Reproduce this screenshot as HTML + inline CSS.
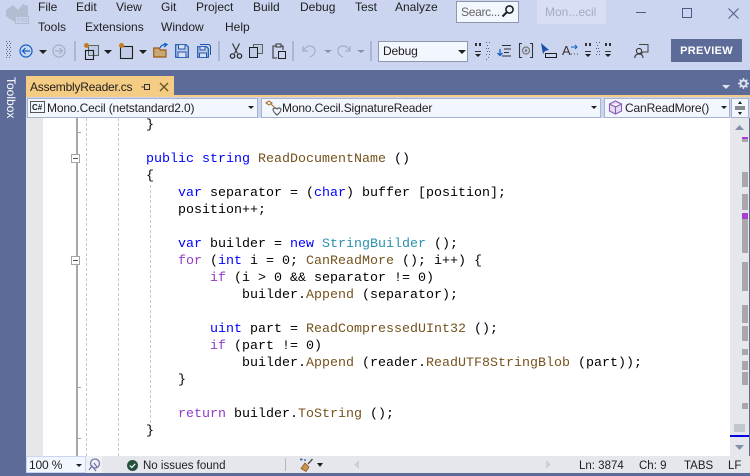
<!DOCTYPE html>
<html><head><meta charset="utf-8">
<style>
html,body{margin:0;padding:0;background:#ccd5f0;}
#r{position:relative;width:750px;height:476px;overflow:hidden;background:#ccd5f0;font-family:"Liberation Sans",sans-serif;font-size:12px;color:#1e1e1e;}
#r div,#r span.a,#r svg{position:absolute;}
.m{top:0;line-height:14px;white-space:nowrap;}
.c{font-family:"Liberation Mono",monospace;font-size:13.33px;line-height:17px;height:17px;white-space:pre;color:#000;}
.k{color:#0000ff}.t{color:#2b91af}.f{color:#74531f}.p{color:#8f3cc8}
.dd{background:#f2f6fe;border:1px solid #a9b2cc;box-sizing:border-box;height:20px;line-height:18px;white-space:nowrap;letter-spacing:-.15px;}
.ar{width:0;height:0;border-left:4px solid transparent;border-right:4px solid transparent;border-top:4px solid #1e1e1e;}
.mk{left:742px;width:6px;background:#a8a8a8;}
.ds{width:1px;background:repeating-linear-gradient(to bottom,#c8c8c8 0,#c8c8c8 3px,transparent 3px,transparent 5px);}
</style></head><body><div id="r">

<!-- logo -->
<svg style="left:5px;top:3px" width="24" height="24" viewBox="0 0 24 24"><path d="M1 7 L8 2 L13 7 L18 1 L23 3 L23 13 L10 13 L10 19 L5 16 L1 13Z" fill="#b4bcd2"/><rect x="10.5" y="13.5" width="13" height="7" fill="#ccd5f0" stroke="#b4bcd2" stroke-width="1.2"/><text x="12" y="19.2" font-family="Liberation Sans" font-size="5.2" font-weight="bold" fill="#b4bcd2">PRE</text></svg>

<div class="m" style="left:38px;top:0">File</div>
<div class="m" style="left:76px;top:0">Edit</div>
<div class="m" style="left:116px;top:0">View</div>
<div class="m" style="left:161px;top:0">Git</div>
<div class="m" style="left:196px;top:0">Project</div>
<div class="m" style="left:253px;top:0">Build</div>
<div class="m" style="left:300px;top:0">Debug</div>
<div class="m" style="left:355px;top:0">Test</div>
<div class="m" style="left:395px;top:0">Analyze</div>
<div class="m" style="left:38px;top:20px">Tools</div>
<div class="m" style="left:85px;top:20px">Extensions</div>
<div class="m" style="left:161px;top:20px">Window</div>
<div class="m" style="left:225px;top:20px">Help</div>

<!-- search -->
<div style="left:456px;top:1px;width:63px;height:22px;box-sizing:border-box;background:#f2f6fe;border:1px solid #8f97ad;"></div>
<div class="m" style="left:461px;top:5px;color:#666;letter-spacing:-.3px">Searc...</div>
<svg style="left:501px;top:4px" width="14" height="14" viewBox="0 0 14 14"><circle cx="8.5" cy="5.5" r="3.6" fill="none" stroke="#1e1e1e" stroke-width="1.6"/><path d="M6 8 L1.5 12.5" stroke="#1e1e1e" stroke-width="2"/></svg>

<!-- solution name -->
<div style="left:537px;top:0;width:69px;height:24px;background:#d8dff5"></div>
<div class="m" style="left:545px;top:5px;color:#a3abc4">Mon...ecil</div>

<!-- window controls -->
<div style="left:636px;top:12px;width:10px;height:1px;background:#4d5a85"></div>
<div style="left:682px;top:8px;width:10px;height:10px;box-sizing:border-box;border:1px solid #4d5a85"></div>
<svg style="left:728px;top:8px" width="11" height="11" viewBox="0 0 11 11"><path d="M.5 .5L10.5 10.5M10.5 .5L.5 10.5" stroke="#4d5a85" stroke-width="1"/></svg>

<!-- toolbar -->
<svg style="left:6px;top:41px" width="6" height="19"><g fill="#5a6584"><rect x="0" y="0" width="1" height="1"/><rect x="3" y="0" width="1" height="1"/><rect x="1" y="2" width="1" height="1"/><rect x="4" y="2" width="1" height="1"/><rect x="0" y="4" width="1" height="1"/><rect x="3" y="4" width="1" height="1"/><rect x="1" y="6" width="1" height="1"/><rect x="4" y="6" width="1" height="1"/><rect x="0" y="8" width="1" height="1"/><rect x="3" y="8" width="1" height="1"/><rect x="1" y="10" width="1" height="1"/><rect x="4" y="10" width="1" height="1"/><rect x="0" y="12" width="1" height="1"/><rect x="3" y="12" width="1" height="1"/><rect x="1" y="14" width="1" height="1"/><rect x="4" y="14" width="1" height="1"/><rect x="0" y="16" width="1" height="1"/><rect x="3" y="16" width="1" height="1"/></g></svg>
<svg style="left:19px;top:44px" width="14" height="14" viewBox="0 0 14 14"><circle cx="7" cy="7" r="6" fill="none" stroke="#0e5fc4" stroke-width="1.2"/><path d="M11 7H3.5M6.5 4L3.5 7L6.5 10" fill="none" stroke="#0e5fc4" stroke-width="1.2"/></svg>
<div class="ar" style="left:39px;top:50px"></div>
<svg style="left:52px;top:44px" width="14" height="14" viewBox="0 0 14 14"><circle cx="7" cy="7" r="6" fill="none" stroke="#a6adc4" stroke-width="1.2"/><path d="M3 7H10.5M7.5 4L10.5 7L7.5 10" fill="none" stroke="#a6adc4" stroke-width="1.2"/></svg>
<div style="left:74px;top:41px;width:2px;height:20px;background:#aab7d8"></div>
<svg style="left:83px;top:42px" width="18" height="18" viewBox="0 0 18 18"><rect x="5.5" y="3.5" width="10" height="10" fill="#c0cbe6" stroke="#55675f"/><rect x="2.5" y="8.5" width="8" height="9" fill="none" stroke="#1e1e1e" stroke-width="1.1"/><circle cx="3.5" cy="3.5" r="2.5" fill="#c27d1e"/></svg>
<div class="ar" style="left:104px;top:50px"></div>
<svg style="left:118px;top:42px" width="17" height="18" viewBox="0 0 17 18"><rect x="2.5" y="4.5" width="12" height="12" fill="#c0cbe6" stroke="#1e1e1e" stroke-width="1.1"/><circle cx="3.5" cy="3.5" r="2.5" fill="#c27d1e"/></svg>
<div class="ar" style="left:139px;top:50px"></div>
<svg style="left:153px;top:43px" width="16" height="15" viewBox="0 0 16 15"><path d="M.7 14V5H6L7.5 7H13V14Z" fill="#c9a873" stroke="#9b5a14" stroke-width="1.2"/><path d="M7 5 Q8 1.5 13 1.5M11 0L14 1.5L11 4" fill="none" stroke="#0e5fc4" stroke-width="1.2"/></svg>
<svg style="left:175px;top:44px" width="14" height="14" viewBox="0 0 14 14"><path d="M.7.7H11L13.3 3V13.3H.7Z" fill="#c0cbe6" stroke="#1b56b0" stroke-width="1.2"/><path d="M3.5 1V5H10V1M3 13V8H11V13" fill="#d6def2" stroke="#1b56b0"/></svg>
<svg style="left:197px;top:44px" width="14" height="14" viewBox="0 0 14 14"><path d="M.7 2.7H9.5L11.3 4.5V13.3H.7Z" fill="#c0cbe6" stroke="#1b56b0" stroke-width="1.2"/><path d="M3 3V6H8V3M2.5 13V9H9.5V13" fill="#d6def2" stroke="#1b56b0"/><path d="M3 .5H12L13.5 2V11" fill="none" stroke="#1b56b0"/></svg>
<div style="left:218px;top:41px;width:2px;height:20px;background:#aab7d8"></div>
<svg style="left:229px;top:43px" width="14" height="16" viewBox="0 0 14 16"><path d="M3.5 .5L8.5 10.5M10.5 .5L5.5 10.5" stroke="#3c3c3c" stroke-width="1.2"/><circle cx="3.5" cy="13" r="2.2" fill="none" stroke="#1e1e1e" stroke-width="1.2"/><circle cx="10.5" cy="13" r="2.2" fill="none" stroke="#1e1e1e" stroke-width="1.2"/></svg>
<svg style="left:249px;top:44px" width="14" height="14" viewBox="0 0 14 14"><rect x="4.5" y=".5" width="9" height="9" fill="#c0cbe6" stroke="#55675f"/><rect x=".5" y="3.5" width="8" height="10" fill="#c0cbe6" stroke="#1e1e1e"/></svg>
<svg style="left:272px;top:43px" width="14" height="16" viewBox="0 0 14 16"><path d="M4 3H1V15H5M9 3H11V7" fill="none" stroke="#333" stroke-width="1.1"/><rect x="4" y="1" width="5" height="3" fill="#ccd5f0" stroke="#333"/><rect x="6.5" y="8.5" width="7" height="7" fill="#ccd5f0" stroke="#1e1e1e"/></svg>
<div style="left:292px;top:41px;width:2px;height:20px;background:#aab7d8"></div>
<svg style="left:302px;top:44px" width="14" height="14" viewBox="0 0 14 14"><path d="M1 2V7H6M1.5 6.5 Q4 2 8 2 Q13 2 13 7 Q13 11 8 13" fill="none" stroke="#a6adc4" stroke-width="1.2"/></svg>
<div class="ar" style="left:324px;top:50px;border-width:3px 4px 0;border-top-color:#8b93ab"></div>
<svg style="left:337px;top:44px" width="14" height="14" viewBox="0 0 14 14"><path d="M13 2V7H8M12.5 6.5 Q10 2 6 2 Q1 2 1 7 Q1 11 6 13" fill="none" stroke="#a6adc4" stroke-width="1.2"/></svg>
<div class="ar" style="left:357px;top:50px;border-width:3px 4px 0;border-top-color:#8b93ab"></div>
<div style="left:370px;top:41px;width:2px;height:20px;background:#aab7d8"></div>

<div class="dd" style="left:378px;top:41px;width:90px;height:21px;background:#f2f6fe;border-color:#8f97ad;padding-left:4px;line-height:19px">Debug</div>
<div class="ar" style="left:458px;top:50px"></div>

<svg style="left:474px;top:41px" width="20" height="19" viewBox="0 0 20 19"><path d="M1 2h2v3H1zM5 2h2v3H5z" fill="#333"/><rect x="1" y="10" width="6" height="1" fill="#333"/><path d="M1 13H7L4 16Z" fill="#1e1e1e"/><g fill="#5a6584"><rect x="12" y="1" width="1" height="1"/><rect x="15" y="1" width="1" height="1"/><rect x="13" y="4" width="1" height="1"/><rect x="14" y="7" width="1" height="1"/><rect x="12" y="7" width="1" height="1"/><rect x="15" y="10" width="1" height="1"/><rect x="13" y="10" width="1" height="1"/><rect x="12" y="13" width="1" height="1"/><rect x="15" y="13" width="1" height="1"/><rect x="14" y="16" width="1" height="1"/><rect x="12" y="18" width="1" height="1"/></g></svg>
<svg style="left:497px;top:44px" width="15" height="14" viewBox="0 0 15 14"><path d="M5 1.5H14M7 5H14M7 8.5H12M5 12H14" stroke="#2f2f2f" stroke-width="1"/><path d="M3 5V11M.5 9L3 11.5L5.5 9" fill="none" stroke="#0e5fc4" stroke-width="1.3"/></svg>
<svg style="left:518px;top:42px" width="16" height="17" viewBox="0 0 16 17"><path d="M4 1.5H1.5V15.5H4M12 1.5H14.5V15.5H12" fill="none" stroke="#333" stroke-width="1.1"/><circle cx="8" cy="8.5" r="3.5" fill="none" stroke="#777" stroke-width="1.2"/><circle cx="8" cy="8.5" r="1.3" fill="#777"/></svg>
<svg style="left:540px;top:42px" width="17" height="17" viewBox="0 0 17 17"><path d="M1 1L9 8L5 9L3 12Z" fill="#1a50a8"/><rect x="5.5" y="11.5" width="11" height="4" fill="#ccd5f0" stroke="#1e1e1e"/></svg>
<div style="left:562px;top:43px;font-size:13px;line-height:15px;color:#333">A</div>
<svg style="left:571px;top:44px" width="7" height="12" viewBox="0 0 7 12"><path d="M0 3H6M4 1L6 3L4 5" fill="none" stroke="#0e5fc4" stroke-width="1"/><path d="M0 10H1M3 10H4M6 10H7" stroke="#444"/></svg>
<svg style="left:584px;top:41px" width="28" height="19" viewBox="0 0 28 19"><path d="M1 2h2v3H1zM5 2h2v3H5z" fill="#333"/><rect x="1" y="10" width="6" height="1" fill="#333"/><path d="M1 13H7L4 16Z" fill="#1e1e1e"/><g fill="#5a6584"><rect x="12" y="1" width="1" height="1"/><rect x="15" y="1" width="1" height="1"/><rect x="13" y="4" width="1" height="1"/><rect x="14" y="7" width="1" height="1"/><rect x="12" y="7" width="1" height="1"/><rect x="15" y="10" width="1" height="1"/><rect x="13" y="10" width="1" height="1"/><rect x="12" y="13" width="1" height="1"/><rect x="15" y="13" width="1" height="1"/></g><path d="M21 2h2v3h-2zM25 2h2v3h-2z" fill="#333"/><rect x="21" y="10" width="6" height="1" fill="#333"/><path d="M21 13H27L24 16Z" fill="#1e1e1e"/></svg>
<svg style="left:634px;top:43px" width="15" height="16" viewBox="0 0 15 16"><path d="M5 1.5H14V9H9L7 11" fill="none" stroke="#444" stroke-width="1"/><circle cx="5" cy="8" r="2.6" fill="none" stroke="#333" stroke-width="1.1"/><path d="M.8 15 Q1 11 5 11 Q9 11 9 15" fill="none" stroke="#333" stroke-width="1.1"/></svg>
<div style="left:671px;top:39px;width:71px;height:23px;background:#5d6b99;color:#fff;font-weight:bold;font-size:11px;line-height:24px;text-align:center;letter-spacing:.3px">PREVIEW</div>

<!-- blue band -->
<div style="left:0;top:70px;width:750px;height:406px;background:#5d6b99"></div>
<div style="left:0;top:77px;width:26px;height:44px"><div style="left:4px;top:0;color:#fff;font-size:12px;line-height:14px;writing-mode:vertical-rl;white-space:nowrap">Toolbox</div></div>
<div style="left:26px;top:76px;width:148px;height:20px;background:#f5cc84"></div>
<div class="m" style="left:30px;top:80px;font-size:12px;letter-spacing:-.22px">AssemblyReader.cs</div>
<svg style="left:141px;top:82px" width="10" height="10" viewBox="0 0 10 10"><path d="M3.5 2V8M.5 5H3.5M3.5 2.5H8.5V7.5H3.5" fill="none" stroke="#333" stroke-width="1"/></svg>
<svg style="left:159px;top:82px" width="10" height="10" viewBox="0 0 10 10"><path d="M1 1L9 9M9 1L1 9" stroke="#6b5427" stroke-width="1.4"/></svg>
<svg style="left:722px;top:85px" width="8" height="4"><path d="M0 0H8L4 4Z" fill="#dfe3f0"/></svg>
<svg style="left:738px;top:78px" width="11" height="11" viewBox="0 0 11 11"><circle cx="5.5" cy="5.5" r="3" fill="none" stroke="#dfe3f0" stroke-width="2"/><path d="M5.5 0V2M5.5 9V11M0 5.5H2M9 5.5H11M1.6 1.6L3 3M8 8L9.4 9.4M9.4 1.6L8 3M3 8L1.6 9.4" stroke="#dfe3f0" stroke-width="1.4"/></svg>

<!-- navigation row -->
<div style="left:26px;top:95px;width:724px;height:2px;background:#f5cc84"></div>
<div style="left:26px;top:97px;width:724px;height:21px;background:#ccd5f0"></div>
<div class="dd" style="left:27px;top:98px;width:231px;padding-left:19px">Mono.Cecil (netstandard2.0)</div>
<svg style="left:30px;top:101px" width="15" height="13" viewBox="0 0 15 13"><rect x=".5" y=".5" width="14" height="11" fill="#f2f6fe" stroke="#555"/><text x="2" y="9" font-family="Liberation Sans" font-size="8" font-weight="bold" fill="#222">C#</text></svg>
<div class="ar" style="left:248px;top:106px;border-width:3px 3px 0"></div>
<div class="dd" style="left:261px;top:98px;width:340px;padding-left:20px">Mono.Cecil.SignatureReader</div>
<svg style="left:265px;top:100px" width="17" height="16" viewBox="0 0 17 16"><path d="M1 3L4 1L7 3L4 5ZM6 4L10 8" fill="none" stroke="#a9742a" stroke-width="1.1"/><path d="M8 9 Q10 7 12 9 Q14 7 16 9 Q16 12 12 15 Q8 12 8 9Z" fill="none" stroke="#555" stroke-width="1.1"/></svg>
<div class="ar" style="left:591px;top:106px;border-width:3px 3px 0"></div>
<div class="dd" style="left:604px;top:98px;width:126px;padding-left:20px">CanReadMore()</div>
<svg style="left:608px;top:100px" width="15" height="15" viewBox="0 0 15 15"><path d="M7.5 1L13.5 4V11L7.5 14L1.5 11V4ZM1.5 4L7.5 7L13.5 4M7.5 7V14" fill="#e8dcf5" stroke="#8a5bb5" stroke-width="1.1"/></svg>
<div class="ar" style="left:721px;top:106px;border-width:3px 3px 0"></div>
<div style="left:731px;top:98px;width:18px;height:20px;background:#f2f6fe;border:1px solid #a9b2cc;box-sizing:border-box"></div>
<svg style="left:734px;top:99px" width="12" height="18" viewBox="0 0 12 18"><path d="M1 8H11M1 10H11" stroke="#1e1e1e"/><path d="M4 5H8L6 2ZM4 13H8L6 16Z" fill="#1e1e1e"/></svg>

<!-- editor -->
<div style="left:26px;top:118px;width:704px;height:338px;background:#fff"></div>
<div style="left:26px;top:118px;width:17px;height:338px;background:#e6e7e8"></div>
<div style="left:76px;top:118px;width:2px;height:338px;background:#a8a8a8"></div>
<div style="left:76px;top:132px;width:5px;height:1px;background:#a5a5a5"></div>
<div style="left:76px;top:387px;width:5px;height:1px;background:#a5a5a5"></div>
<div style="left:76px;top:438px;width:5px;height:1px;background:#a5a5a5"></div>
<div style="left:71px;top:154px;width:9px;height:9px;box-sizing:border-box;background:#fff;border:1px solid #a5a5a5"></div>
<div style="left:73px;top:158px;width:5px;height:1px;background:#555"></div>
<div style="left:71px;top:256px;width:9px;height:9px;box-sizing:border-box;background:#fff;border:1px solid #a5a5a5"></div>
<div style="left:73px;top:260px;width:5px;height:1px;background:#555"></div>
<div class="ds" style="left:86px;top:118px;height:338px"></div>
<div class="ds" style="left:118px;top:118px;height:338px"></div>
<div class="ds" style="left:150px;top:185px;height:238px"></div>

<div class="c" style="left:146px;top:117px">}</div>
<div class="c" style="left:146px;top:151px"><span class="k">public</span> <span class="k">string</span> <span class="f">ReadDocumentName</span> ()</div>
<div class="c" style="left:146px;top:168px">{</div>
<div class="c" style="left:178px;top:185px"><span class="k">var</span> separator = (<span class="k">char</span>) buffer [position];</div>
<div class="c" style="left:178px;top:202px">position++;</div>
<div class="c" style="left:178px;top:236px"><span class="k">var</span> builder = <span class="k">new</span> <span class="t">StringBuilder</span> ();</div>
<div class="c" style="left:178px;top:253px"><span class="p">for</span> (<span class="k">int</span> i = 0; <span class="f">CanReadMore</span> (); i++) {</div>
<div class="c" style="left:210px;top:270px"><span class="p">if</span> (i &gt; 0 &amp;&amp; separator != 0)</div>
<div class="c" style="left:242px;top:287px">builder.<span class="f">Append</span> (separator);</div>
<div class="c" style="left:210px;top:321px"><span class="k">uint</span> part = <span class="f">ReadCompressedUInt32</span> ();</div>
<div class="c" style="left:210px;top:338px"><span class="p">if</span> (part != 0)</div>
<div class="c" style="left:242px;top:355px">builder.<span class="f">Append</span> (reader.<span class="f">ReadUTF8StringBlob</span> (part));</div>
<div class="c" style="left:178px;top:372px">}</div>
<div class="c" style="left:178px;top:406px"><span class="p">return</span> builder.<span class="f">ToString</span> ();</div>
<div class="c" style="left:146px;top:423px">}</div>

<!-- scrollbar -->
<div style="left:730px;top:118px;width:19px;height:338px;background:#e6e7ed"></div>
<svg style="left:735px;top:125px" width="9" height="5"><path d="M0 5H9L4.5 0Z" fill="#868fa8"/></svg>
<div class="mk" style="top:137px;height:5px"></div>
<div class="mk" style="top:137px;height:2px;background:#a640d0"></div>
<div class="mk" style="top:172px;height:15px"></div>
<div class="mk" style="top:194px;height:16px"></div>
<div class="mk" style="top:219px;height:34px"></div>
<div class="mk" style="top:213px;height:6px;background:#a640d0"></div>
<div class="mk" style="top:262px;height:29px"></div>
<div class="mk" style="top:305px;height:18px"></div>
<div class="mk" style="top:326px;height:15px"></div>
<div class="mk" style="top:349px;height:6px"></div>
<div class="mk" style="top:361px;height:9px"></div>
<div class="mk" style="top:372px;height:13px"></div>
<div class="mk" style="top:403px;height:6px"></div>
<div style="left:734px;top:424px;width:11px;height:8px;background:#c2c6cf"></div>
<div style="left:730px;top:435px;width:19px;height:2px;background:#0000e0"></div>
<svg style="left:735px;top:445px" width="9" height="5"><path d="M0 0H9L4.5 5Z" fill="#868fa8"/></svg>

<!-- status bar -->
<div style="left:26px;top:456px;width:724px;height:17px;background:#e6e7ed"></div>
<div class="dd" style="left:26px;top:456px;width:60px;height:17px;line-height:17px;padding-left:2px;border:1px solid #ccd5f0;background:#f2f6fe">100 %</div>
<div class="ar" style="left:76px;top:464px;border-width:3px 3px 0"></div>
<div style="left:86px;top:456px;width:16px;height:17px;background:#f0f0f5"></div>
<svg style="left:88px;top:458px" width="13" height="14" viewBox="0 0 13 14"><circle cx="7" cy="5.5" r="4.5" fill="none" stroke="#6d7aa6" stroke-width="1.3"/><path d="M1 12L4 8L8 13M6 5L9 9" fill="none" stroke="#6d7aa6" stroke-width="1.3"/></svg>
<svg style="left:127px;top:460px" width="11" height="11" viewBox="0 0 11 11"><circle cx="5.5" cy="5.5" r="5.5" fill="#24513d"/><path d="M2.8 5.5L4.8 7.5L8.2 3.8" fill="none" stroke="#fff" stroke-width="1.2"/></svg>
<div class="m" style="left:143px;top:459px;font-size:11.5px">No issues found</div>
<div style="left:285px;top:458px;width:1px;height:13px;background:#b4b9c9"></div>
<svg style="left:300px;top:457px" width="14" height="15" viewBox="0 0 14 15"><path d="M12.5 2L8 7" stroke="#555" stroke-width="1.5"/><path d="M5 6L9 10L6 14.5L1 11.5Z" fill="#c69550" stroke="#8b5a1e" stroke-width=".8"/><path d="M1 1V4M0 2.5H3M5 2V4M4 3H6" stroke="#2a5ab0" stroke-width=".8"/></svg>
<div class="ar" style="left:317px;top:463px;border-width:4px 3.5px 0"></div>
<svg style="left:354px;top:460px" width="6" height="9"><path d="M5 0V9L0 4.5Z" fill="#cdd0d9"/></svg>
<svg style="left:546px;top:460px" width="6" height="9"><path d="M0 0V9L5 4.5Z" fill="#cdd0d9"/></svg>
<div class="m" style="left:579px;top:459px;font-size:11.5px">Ln: 3874</div>
<div class="m" style="left:639px;top:459px;font-size:11.5px">Ch: 9</div>
<div class="m" style="left:684px;top:459px;font-size:11.5px">TABS</div>
<div class="m" style="left:728px;top:459px;font-size:11.5px">LF</div>

</div></body></html>
